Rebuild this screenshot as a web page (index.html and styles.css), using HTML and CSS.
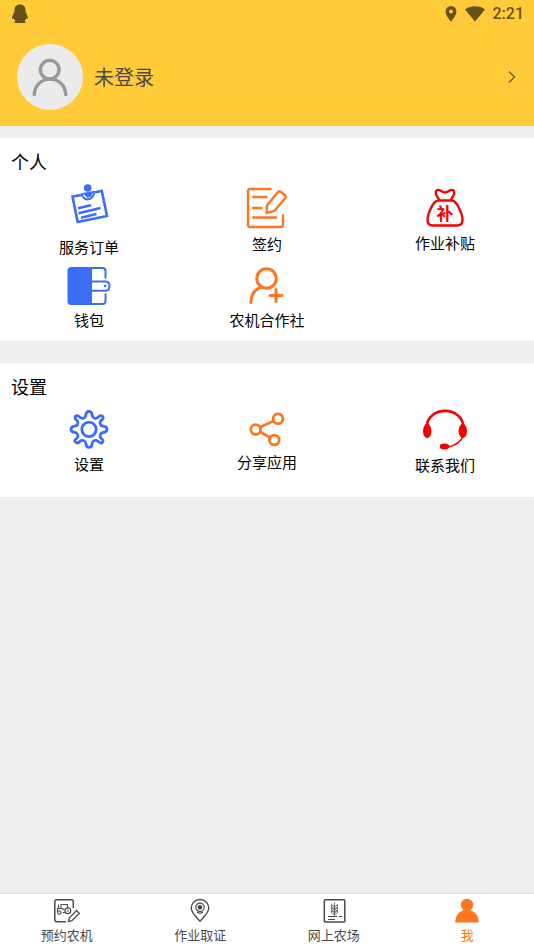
FILE: index.html
```html
<!DOCTYPE html>
<html lang="zh-CN">
<head>
<meta charset="utf-8">
<meta name="viewport" content="width=device-width, initial-scale=1">
<title>我</title>
<link rel="stylesheet" href="styles.css">
</head>
<body>
<header class="header">
  <div class="status">
    <svg class="status-app" width="18" height="20" viewBox="0 0 18 20" fill="currentColor"><path d="M9 0.500C5 .5 3.500 3 3.500 6C3.500 8 3.300 8.500 2.200 10.500C1.200 12.500 .8 14 1.200 15C1.800 15.300 2.400 14.500 2.800 14C3.100 15.500 3.600 16.500 4.500 17.200C3.300 17.700 3.100 18.700 3.800 19H14.200C14.900 18.700 14.700 17.700 13.500 17.200C14.400 16.500 14.900 15.500 15.200 14C15.600 14.500 16.200 15.300 16.800 15C17.200 14 16.800 12.500 15.800 10.500C14.700 8.500 14.500 8 14.500 6C14.500 3 13 .5 9 .5Z"/></svg>
    <div class="status-right">
      <svg width="12" height="16" viewBox="0 0 12 16" fill="currentColor"><path fill-rule="evenodd" d="M6 0A5.500 5.500 0 0 0 .5 5.500C.5 9.500 6 15.500 6 15.500S11.500 9.500 11.500 5.500A5.500 5.500 0 0 0 6 0ZM6 3.500A2 2 0 1 1 6 7.500A2 2 0 1 1 6 3.500Z"/></svg>
      <svg width="20" height="16" viewBox="0 0 20 16" fill="currentColor"><path d="M0 3.500C5.500-.8 14.500-.8 20 3.500L10 15.500Z"/></svg>
      <span class="clock">2:21</span>
    </div>
  </div>
  <a class="profile" href="#login">
    <svg class="avatar" width="66" height="66" viewBox="0 0 66 66"><circle cx="33" cy="33" r="33" fill="#ebebeb"/><g fill="none" stroke="#999" stroke-width="3.400" stroke-linecap="round"><circle cx="32.700" cy="25.700" r="9.300"/><path d="M17.300 50.500C18 30 48 30 48.700 50.500"/></g></svg>
    <span class="profile-name">未登录</span>
    <svg width="8" height="12" viewBox="0 0 8 12" fill="none" stroke="#5c5440" stroke-width="1.200"><path d="M1 .5L6.500 6L1 11.500"/></svg>
  </a>
</header>

<main class="content">
  <section class="panel">
    <h2 class="panel-title">个人</h2>
    <nav class="grid">
      <a class="item blue" href="#orders">
        <svg width="60" height="53" viewBox="0 0 60 53" fill="none" stroke="currentColor" stroke-width="2.600"><path d="M22.500 11L13.500 12.500L18.700 38L48 32L42.800 7L36 8.200"/><path d="M23 9C22.500 18.500 36 17 35 7" stroke-width="2"/><circle cx="28.700" cy="4" r="3.800" fill="currentColor" stroke="none"/><path d="M25 9.500L33.300 8L31.500 12L28.500 12.800Z" fill="currentColor" stroke-width="1.500"/><path d="M19 24.300L32 21.300M19.500 29.200L41.500 24M22 33.800L37.500 30"/></svg>
        <span class="label">服务订单</span>
      </a>
      <a class="item orange" href="#contract">
        <svg width="60" height="50" viewBox="0 0 60 50" fill="none" stroke="currentColor" stroke-width="2.400" stroke-linecap="round" stroke-linejoin="round"><path d="M33.500 5H13.500Q11 5 11 7.500V40.500Q11 43 13.500 43H43.500Q46 43 46 40.500V31.500"/><path d="M16 13H29.500M16 24H24.500M16 33.500H39"/><path d="M30 21.500L40.500 8.500Q42 6.800 44 8L47.800 11Q49.500 12.500 48 14.300L37.500 26.800L29.500 29Z"/></svg>
        <span class="label">签约</span>
      </a>
      <a class="item red" href="#subsidy">
        <svg width="60" height="49" viewBox="0 0 60 49" fill="none" stroke="currentColor" stroke-width="2.400" stroke-linecap="round" stroke-linejoin="round"><path d="M24 15.500C22 11.500 19 9.500 21.500 6.500C24.500 4 26.500 8.500 30 8.500C33.500 8.500 35.500 4 38.500 6.500C41 9.500 38 11.500 36 15.500"/><path d="M23 16.500H37C42 17 47.500 30 47.500 36Q47.500 41.500 42 41.500H18Q12.500 41.500 12.500 36C12.500 30 18 17 23 16.500Z"/><text class="bag-text" x="30" y="36" text-anchor="middle">补</text></svg>
        <span class="label">作业补贴</span>
      </a>
      <a class="item blue" href="#wallet">
        <svg width="60" height="53" viewBox="0 0 60 53" fill="none" stroke="currentColor" stroke-width="2"><path d="M12 10H33V48H12Q8.500 48 8.500 44.500V13.500Q8.500 10 12 10Z" fill="currentColor" stroke="none"/><path d="M32 11H43.500Q46.500 11 46.500 14V21.500M32 47H43.500Q46.500 47 46.500 44V36.500"/><path d="M32 24.500H46.500Q50.500 24.500 50.500 29T46.500 33.700H32"/><circle cx="46" cy="29" r="1.300" fill="currentColor" stroke="none"/></svg>
        <span class="label">钱包</span>
      </a>
      <a class="item orange" href="#coop">
        <svg width="60" height="53" viewBox="0 0 60 53" fill="none" stroke="currentColor" stroke-width="3" stroke-linecap="round"><circle cx="29.500" cy="21.500" r="9.700"/><path d="M13.800 45.500C14.300 37.500 18 32 24.500 30M33 38.500H45M39 32.500V44.500"/></svg>
        <span class="label">农机合作社</span>
      </a>
    </nav>
  </section>

  <section class="panel panel-last">
    <h2 class="panel-title">设置</h2>
    <nav class="grid">
      <a class="item blue" href="#settings">
        <svg width="60" height="45" viewBox="0 0 60 45" fill="none" stroke="currentColor" stroke-width="2.800" stroke-linejoin="round"><circle cx="30" cy="20.300" r="7.200"/><path d="M26.800 6.500Q27 2.300 30 2.300T33.200 6.500Q33.500 8.500 35.500 9.200Q37.500 9.800 39 8.300Q41.500 5.500 43.500 7.300T42 11.500Q40.500 13 41.300 15Q42 17 44 17.100Q48 17.300 48 20.300T44 23.500Q42 23.700 41.300 25.700Q40.500 27.500 42 29.100Q45 31.500 43.500 33.300T39 32.300Q37.500 31 35.500 31.500Q33.500 32.200 33.200 34.100Q33 38.300 30 38.300T26.800 34.100Q26.500 32.200 24.500 31.500Q22.500 31 21 32.300Q18.500 35.100 16.500 33.300T18 29.100Q19.500 27.500 18.700 25.700Q18 23.700 16 23.500Q12 23.300 12 20.300T16 17.100Q18 17 18.700 15Q19.500 13 18 11.500Q15 9 16.500 7.300T21 8.300Q22.500 9.800 24.500 9.200Q26.500 8.500 26.800 6.500Z"/></svg>
        <span class="label">设置</span>
      </a>
      <a class="item orange" href="#share">
        <svg width="60" height="43" viewBox="0 0 60 43" fill="none" stroke="currentColor" stroke-width="2.800"><circle cx="41" cy="9.800" r="4.900"/><circle cx="18.700" cy="20.500" r="4.900"/><circle cx="37.300" cy="31" r="4.900"/><path d="M23 18.300L36.500 12M23 22.800L33 28.500"/></svg>
        <span class="label">分享应用</span>
      </a>
      <a class="item red" href="#contact">
        <svg width="60" height="46" viewBox="0 0 60 46" fill="none" stroke="currentColor" stroke-width="2.600"><path d="M11.500 18C13-3.500 47-3.500 48.500 18"/><path d="M48 27Q45 35.500 33 38" stroke-width="1.500"/><ellipse cx="12.200" cy="22" rx="4.200" ry="7.200" fill="currentColor" stroke="none"/><ellipse cx="47.800" cy="22" rx="4.200" ry="7.200" fill="currentColor" stroke="none"/><ellipse cx="29.500" cy="37.500" rx="4.800" ry="3" fill="currentColor" stroke="none"/></svg>
        <span class="label">联系我们</span>
      </a>
    </nav>
  </section>
</main>

<nav class="tabs">
  <a class="tab" href="#book">
    <svg width="28" height="26" viewBox="0 0 28 26" fill="none" stroke="currentColor" stroke-width="1.500"><path d="M20.300 10V4Q20.300 1.800 18 1.800H4Q1.800 1.800 1.800 4V21.500Q1.800 23.700 4 23.700H13"/><path d="M15.500 23.700L16.300 20L23.500 12.500L26.300 15.200L19 22.700Z" stroke-width="1.300"/><path d="M8 11V6.500H14.500V10M4.500 14V10.500H9L11 12M5.500 6.500V10M9.500 14.500H12" stroke-width="1.100"/><circle cx="6.300" cy="14.500" r="1.700" stroke-width="1.100"/><circle cx="14.800" cy="12.800" r="2.900" stroke-width="1.300"/><circle cx="14.800" cy="12.800" r=".6" stroke-width=".8"/></svg>
    <span class="tab-label">预约农机</span>
  </a>
  <a class="tab" href="#evidence">
    <svg width="28" height="26" viewBox="0 0 28 26" fill="none" stroke="currentColor" stroke-width="1.400"><path d="M14 23.300C10 19 5.200 14.500 5.200 10A8.800 8.500 0 0 1 22.800 10C22.800 14.500 18 19 14 23.300Z" stroke-linejoin="round"/><circle cx="14" cy="9.300" r="4.200" stroke-width="1.200"/><circle cx="14" cy="9.300" r="1.700" fill="currentColor"/><path d="M11 14.500Q14 13 17 14.500Q14 16.300 11 14.500Z" stroke-width="1"/></svg>
    <span class="tab-label">作业取证</span>
  </a>
  <a class="tab" href="#farm">
    <svg width="28" height="26" viewBox="0 0 28 26" fill="none" stroke="currentColor" stroke-width="1.500"><rect x="4.300" y="1.800" width="20.500" height="22.200" rx="1"/><path d="M14.500 4.500V17.500M14.500 9L11.500 6.500V8.500L14.500 11L17.500 8.500V6.500L14.500 9M14.500 12L11.500 9.500V11.500L14.500 14L17.500 11.500V9.500L14.500 12M14.500 15L11.500 12.500V14.500L14.500 17L17.500 14.500V12.500L14.500 15" stroke-width=".8"/><path d="M8 18.500H17M19 18.500H22M8 21.500H15" stroke-width="1"/></svg>
    <span class="tab-label">网上农场</span>
  </a>
  <a class="tab tab-active" href="#me" aria-current="page">
    <svg width="28" height="26" viewBox="0 0 28 26" fill="currentColor"><circle cx="14" cy="7" r="6.200"/><path d="M2.300 24.600C2.300 17 6 14.300 10.500 12L14 12.800L17.500 12C22 14.300 25.700 17 25.700 24.600Z"/></svg>
    <span class="tab-label">我</span>
  </a>
</nav>
</body>
</html>
```
FILE: styles.css
```css
* {
  box-sizing: border-box;
}

body {
  margin: 0;
  min-height: 100vh;
  display: flex;
  flex-direction: column;
  background: #eee;
  color: #000;
  font-family: "Noto Sans CJK SC", sans-serif;
}

a {
  color: inherit;
  text-decoration: none;
}

svg {
  display: block;
  flex: none;
}

.header {
  background: #ffcb38;
}

.status {
  display: flex;
  align-items: center;
  justify-content: space-between;
  height: 28px;
  padding: 0 10px 0 11px;
  color: #665116;
}

.status-right {
  display: flex;
  align-items: center;
  gap: 8px;
}

.clock {
  font: 500 16px/28px Roboto, sans-serif;
}

.profile {
  display: flex;
  align-items: center;
  gap: 11px;
  height: 98px;
  padding: 0 18px 0 17px;
}

.profile-name {
  flex: 1;
  font-size: 20px;
  line-height: 28px;
  color: #4a4a4a;
}

.content {
  flex: 1;
  display: flex;
  flex-direction: column;
  gap: 22px;
  padding-top: 12px;
}

.panel {
  padding-bottom: 11px;
  background: #fff;
}

.panel-last {
  padding-bottom: 22px;
}

.panel-title {
  margin: 0;
  padding-left: 11px;
  font-size: 18px;
  font-weight: 400;
  line-height: 46px;
}

.grid {
  display: grid;
  grid-template-columns: repeat(3, 1fr);
}

.item {
  display: flex;
  flex-direction: column;
  align-items: center;
}

.label {
  font-size: 15px;
  line-height: 20px;
  color: #000;
}

.bag-text {
  fill: currentColor;
  stroke: none;
  font-size: 17px;
  font-weight: 700;
}

.blue {
  color: #3a6dfa;
}

.orange {
  color: #ff7621;
}

.red {
  color: #f60000;
}

.tabs {
  display: grid;
  grid-template-columns: repeat(4, 1fr);
  height: 56px;
  padding-top: 4px;
  border-top: 1px solid #e2e2e2;
  background: #fff;
}

.tab {
  display: flex;
  flex-direction: column;
  align-items: center;
  color: #4a4a4a;
}

.tab-label {
  font-size: 13px;
  line-height: 22px;
}

.tab-active {
  color: #ff7621;
}
```
